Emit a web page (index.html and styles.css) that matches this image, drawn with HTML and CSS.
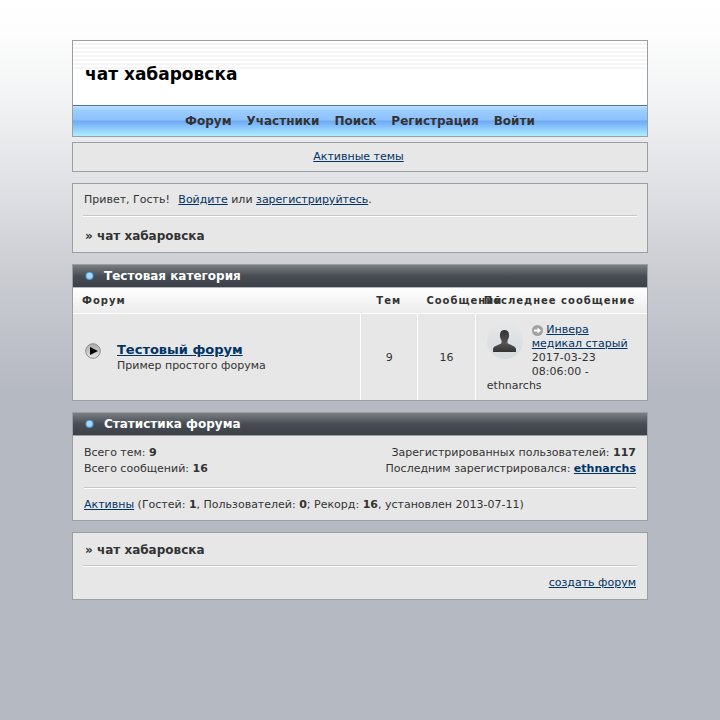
FILE: index.html
```html
<!DOCTYPE html>
<html lang="ru">
<head>
	<meta charset="utf-8">
	<title>чат хабаровска</title>
	<link rel="stylesheet" href="styles.css">
</head>
<body>
	<div class="forum">
		<header class="header">
			<h1 class="title">чат хабаровска</h1>
			<nav class="navlinks">
				<a href="#">Форум</a>
				<a href="#">Участники</a>
				<a href="#">Поиск</a>
				<a href="#">Регистрация</a>
				<a href="#">Войти</a>
			</nav>
		</header>

		<div class="box ulinks"><a href="#">Активные темы</a></div>

		<div class="box welcome">
			<p class="status"><span class="hello">Привет, Гость!</span> <a href="#">Войдите</a> или <a href="#">зарегистрируйтесь</a>.</p>
			<p class="crumbs">» чат хабаровска</p>
		</div>

		<section class="box category">
			<h2>
				<svg class="dot" viewBox="0 0 9 9"><circle cx="4.5" cy="4" r="4" fill="#4a9de0"/><circle cx="4.5" cy="3.8" r="3" fill="#a8d8ff"/></svg>
				Тестовая категория
			</h2>
			<table>
				<thead>
					<tr>
						<th class="c_forum">Форум</th>
						<th class="c_num">Тем</th>
						<th class="c_num">Сообщений</th>
						<th class="c_last">Последнее сообщение</th>
					</tr>
				</thead>
				<tbody>
					<tr>
						<td>
							<div class="topic">
								<svg class="icon" viewBox="0 0 16 16">
									<defs>
										<linearGradient id="ring" x1="0" y1="0" x2="0" y2="1"><stop offset="0" stop-color="#a8a8a8"/><stop offset="1" stop-color="#e6e6e6"/></linearGradient>
									</defs>
									<circle cx="8" cy="8" r="7.3" fill="url(#ring)" stroke="#8c8c8c"/>
									<path d="M5 4L13 8L5 12Z" fill="#000"/>
								</svg>
								<div>
									<h3><a href="#">Тестовый форум</a></h3>
									<p>Пример простого форума</p>
								</div>
							</div>
						</td>
						<td class="num">9</td>
						<td class="num">16</td>
						<td class="last">
							<svg class="avatar" viewBox="0 0 36 36">
								<defs>
									<linearGradient id="man" x1="0" y1="0" x2="0" y2="1"><stop offset="0" stop-color="#333"/><stop offset="0.6" stop-color="#555"/><stop offset="1" stop-color="#333"/></linearGradient>
									<linearGradient id="disc" x1="0" y1="0" x2="0" y2="1"><stop offset="0" stop-color="#e6e7e8"/><stop offset="1" stop-color="#d5dbdf"/></linearGradient>
								</defs>
								<circle cx="18" cy="18" r="18" fill="url(#disc)"/>
								<path d="M17.500 7C20.500 7 22.200 9 22 12C22.300 14 21.500 16 20.500 17.500V20C22 22 28.500 22.500 29 26V29H6V26C6.500 22.500 13 22 14.500 20V17.500C13.500 16 12.700 14 13 12C12.800 9 14.500 7 17.500 7Z" fill="url(#man)"/>
							</svg>
							<svg class="goto" viewBox="0 0 11 11"><circle cx="5.500" cy="5.500" r="5.500" fill="#a0a0a0"/><path d="M2 4.500H5.500V2.500L9 5.500L5.500 8.500V6.500H2Z" fill="#fff"/></svg>
							<a href="#">Инвера медикал старый</a><br>2017-03-23 08:06:00 - ethnarchs
						</td>
					</tr>
				</tbody>
			</table>
		</section>

		<section class="box stats">
			<h2>
				<svg class="dot" viewBox="0 0 9 9"><circle cx="4.5" cy="4" r="4" fill="#4a9de0"/><circle cx="4.5" cy="3.8" r="3" fill="#a8d8ff"/></svg>
				Статистика форума
			</h2>
			<div class="statscon">
				<div class="totals">
					<ul>
						<li>Всего тем: <strong>9</strong></li>
						<li>Всего сообщений: <strong>16</strong></li>
					</ul>
					<ul class="users">
						<li>Зарегистрированных пользователей: <strong>117</strong></li>
						<li>Последним зарегистрировался: <a href="#"><strong>ethnarchs</strong></a></li>
					</ul>
				</div>
				<p class="online"><a href="#">Активны</a> (Гостей: <strong>1</strong>, Пользователей: <strong>0</strong>; Рекорд: <strong>16</strong>, установлен 2013-07-11)</p>
			</div>
		</section>

		<footer class="box footer">
			<p class="crumbs">» чат хабаровска</p>
			<p class="about"><a href="#">создать форум</a></p>
		</footer>
	</div>
</body>
</html>
```
FILE: styles.css
```css
* {
	box-sizing: border-box;
	margin: 0;
	padding: 0;
}
body {
	padding: 40px 10%;
	background: #b5b9c2 linear-gradient(#fff 0, #fdfdfd 30px, #f3f4f5 95px, #dfe0e4 188px, #c9cbd1 280px, #b5b9c2 390px) no-repeat;
	color: #333;
	font: 11px/16px "DejaVu Sans", Verdana, sans-serif;
}
a {
	color: #003366;
}
ul {
	list-style: none;
}
.header,
.box {
	border: 1px solid #9b9fa4;
}
.header {
	margin-bottom: 5px;
	background: #fff;
}
.title {
	height: 64px;
	padding: 22px 12px 0;
	background: repeating-linear-gradient(#fff 0, #fff 2px, #f5f5f5 2px, #f5f5f5 4px) no-repeat;
	background-size: 100% 30px;
	color: #000;
	font-size: 17px;
	line-height: 22px;
}
.navlinks {
	display: flex;
	justify-content: center;
	gap: 15px;
	border-top: 1px solid #55748f;
	background: linear-gradient(#bcdfff 0, #9accff 5px, #8fc2fd 14px, #6fa9f3 15px, #84c0fb 20px, #aeeeff 30px);
	line-height: 30px;
}
.navlinks a {
	color: #333;
	font-size: 12px;
	font-weight: bold;
	text-decoration: none;
}
.box {
	margin-bottom: 11px;
	background: #e7e7e7;
}
.ulinks {
	padding: 6px 3px 6px 0;
	text-align: center;
}
.welcome {
	padding: 8px 10px;
}
.status {
	padding: 0 1px 7px;
}
.hello {
	margin-right: 5px;
}
.crumbs {
	padding: 0 2px;
	font-size: 12px;
	font-weight: bold;
}
.welcome .crumbs,
.about {
	border-top: 1px solid #c4c6c8;
	box-shadow: inset 0 1px #fff;
}
.welcome .crumbs {
	padding-top: 12px;
}

/* dark section bars */
h2 {
	display: flex;
	align-items: center;
	gap: 10px;
	padding: 0 12px;
	background: linear-gradient(#7b7f84, #484d54 50%, #3c4048);
	color: #fff;
	font-size: 12px;
	line-height: 22px;
}
.dot {
	width: 9px;
	height: 9px;
}

table {
	width: 100%;
	border-spacing: 0;
	table-layout: fixed;
}
th {
	height: 27px;
	padding: 0 9px;
	border-top: 1px solid #b4b6b9;
	border-bottom: 1px solid #fff;
	background: linear-gradient(#fff, #ececec);
	font-size: 10px;
	letter-spacing: 1px;
	white-space: nowrap;
}
.c_forum {
	width: 50%;
	text-align: left;
}
.c_num {
	width: 10%;
}
.c_last {
	width: 30%;
	text-align: left;
}
td {
	padding: 9px 11px 7px;
}
td:first-child {
	padding-left: 12px;
}
td + td {
	border-left: 1px solid #fff;
}
.num {
	text-align: center;
}
.topic {
	display: flex;
	align-items: flex-start;
	gap: 16px;
}
.icon {
	width: 16px;
	height: 16px;
	margin-top: 1px;
}
h3 {
	font-size: 13px;
	line-height: 16px;
}
.last {
	line-height: 14px;
}
.avatar {
	float: left;
	width: 36px;
	height: 36px;
	margin: 0 9px 9px 0;
}
.goto {
	width: 11px;
	height: 11px;
	vertical-align: -3px;
}

.statscon {
	padding: 9px 11px 7px;
	border-top: 1px solid #9b9fa4;
}
.totals {
	display: flex;
	justify-content: space-between;
	padding-bottom: 10px;
}
.users {
	text-align: right;
}
.online {
	padding-top: 9px;
	border-top: 1px solid #c4c6c8;
	box-shadow: inset 0 1px #fff;
}

.footer {
	padding: 9px 10px 8px;
}
.footer .crumbs {
	padding-bottom: 7px;
}
.about {
	padding: 9px 1px 0;
	text-align: right;
}
```
